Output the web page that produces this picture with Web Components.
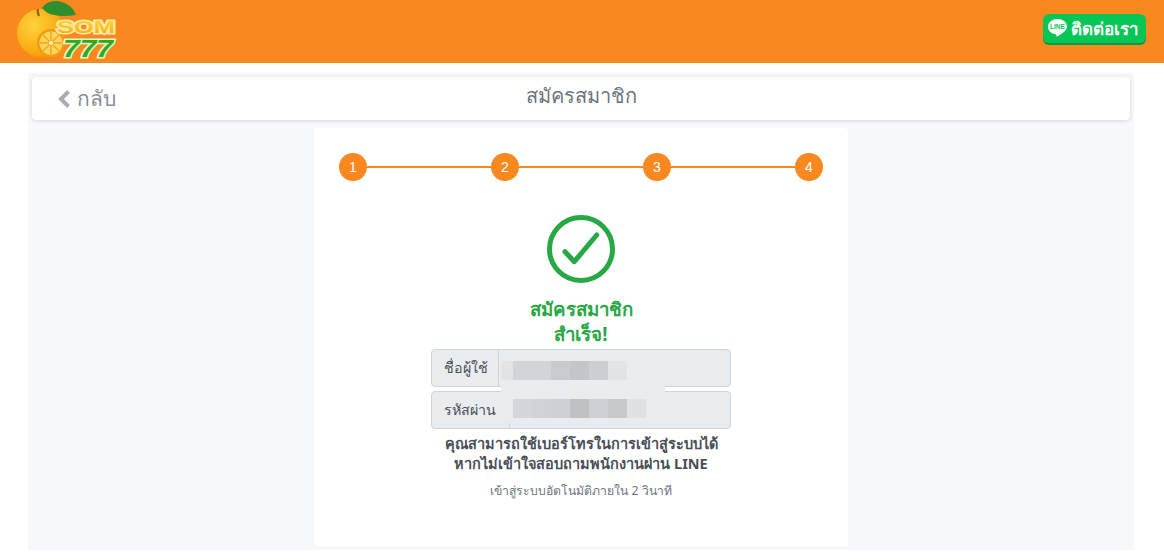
<!DOCTYPE html>
<html lang="th">
<head>
<meta charset="utf-8">
<title>สมัครสมาชิก</title>
<style>
html, body { margin: 0; padding: 0; background: #fff; }
body { height: 560px; overflow: hidden; font-family: "Noto Sans", "Liberation Sans", sans-serif; color: #495057; }
</style>
</head>
<body>
<top-header></top-header>
<page-body>
  <title-bar back="กลับ">สมัครสมาชิก</title-bar>
  <register-card>
    <step-line></step-line>
    <success-mark></success-mark>
    <pixel-field label="ชื่อผู้ใช้" kind="user"></pixel-field>
    <pixel-field label="รหัสผ่าน" kind="pass"></pixel-field>
  </register-card>
</page-body>

<script>
class TopHeader extends HTMLElement {
    constructor() {
        super();
        this.attachShadow({ mode: 'open' });
    }

    connectedCallback() {
        this.shadowRoot.innerHTML = `
            <style>
                :host { display: flex; justify-content: space-between; align-items: flex-start; height: 63px; background: #f9881e; padding: 0 18px 0 16px; }
                .logo { display: block; width: 102px; height: 63px; }
                .line-btn { display: flex; align-items: center; gap: 4px; box-sizing: border-box; width: 103px; height: 29px; margin-top: 14px; padding-left: 5px; background: #06c755; border-radius: 6px; box-shadow: 0 2px 0 #069a48; color: #fff; font-weight: 700; font-size: 17px; }
                svg.bubble { width: 19px; height: 19px; flex: none; }
            </style>
            <svg class="logo" viewBox="0 0 102 63">
                <defs>
                    <radialGradient id="o" cx="0.35" cy="0.35" r="0.8"><stop offset="0" stop-color="#ffd23c"/><stop offset="0.7" stop-color="#f9a90f"/><stop offset="1" stop-color="#e88a05"/></radialGradient>
                    <linearGradient id="g" x1="0" y1="0" x2="0" y2="1"><stop offset="0" stop-color="#ffdb3a"/><stop offset="1" stop-color="#f7a80e"/></linearGradient>
                </defs>
                <circle cx="25" cy="33" r="24" fill="url(#o)"/>
                <path d="M22 9 Q21 12 23 16" stroke="#8a5a22" stroke-width="2" fill="none"/>
                <path d="M26 8 Q31 0 42 1 Q55 3 60 15 Q47 17 38 15 Q31 14 26 8Z" fill="#2f8f2c"/>
                <circle cx="35" cy="43" r="14" fill="#f79a12"/>
                <circle cx="35" cy="43" r="11.500" fill="#ffd65c"/>
                <g stroke="#f7a51c" stroke-width="1.500">
                    <path d="M35 32V54M24 43H46M27 35L43 51M43 35L27 51"/>
                </g>
                <circle cx="35" cy="43" r="2" fill="#fff3c4"/>
                <text x="41" y="33" font-family="Liberation Sans" font-weight="700" font-size="17" textLength="58" lengthAdjust="spacingAndGlyphs" fill="url(#g)" stroke="#ffe9a8" stroke-width="3" paint-order="stroke">SOM</text>
                <text x="47" y="57" font-family="Liberation Sans" font-style="italic" font-weight="700" font-size="24" textLength="50" lengthAdjust="spacingAndGlyphs" fill="#35a822" stroke="#d9f7c4" stroke-width="3" paint-order="stroke">777</text>
            </svg>
            <div class="line-btn">
                <svg class="bubble" viewBox="0 0 19 19">
                    <path d="M9.500 0C4.300 0 0 3.400 0 7.700c0 3.800 3.300 7 7.800 7.600.6.100.7.500.6 1-.1.700-.2 1.400.5 1.200 1.500-.5 6.200-3.500 8.200-5.800C18.300 10.500 19 9.200 19 7.700 19 3.400 14.700 0 9.500 0z" fill="#fff"/>
                    <text x="9.500" y="9.800" text-anchor="middle" font-family="Liberation Sans" font-weight="700" font-size="6.500" fill="#06c755">LINE</text>
                </svg>
                <span>ติดต่อเรา</span>
            </div>
        `;
    }
}

class PageBody extends HTMLElement {
    constructor() {
        super();
        this.attachShadow({ mode: 'open' });
    }

    connectedCallback() {
        this.shadowRoot.innerHTML = `
            <style>
                :host { display: block; box-sizing: border-box; width: 1106px; height: 477px; margin: 10px 0 0 28px; padding: 4px; background: #f7f8fa; }
            </style>
            <slot></slot>
        `;
    }
}

class TitleBar extends HTMLElement {
    constructor() {
        super();
        this.attachShadow({ mode: 'open' });
    }

    connectedCallback() {
        this.shadowRoot.innerHTML = `
            <style>
                :host { display: grid; grid-template-columns: 1fr auto 1fr; align-items: center; height: 43px; padding: 0 25px; background: #fff; border-radius: 4px; box-shadow: 0 1px 4px rgba(0,0,0,.14); color: #6c757d; }
                .back { display: flex; align-items: center; gap: 6px; font-size: 21px; color: #868e96; }
                .title { font-size: 20px; margin-top: -5px; }
                svg { width: 14px; height: 20px; }
            </style>
            <div class="back">
                <svg viewBox="0 0 14 20"><path d="M11.500 2.500 4 10l7.500 7.500" fill="none" stroke="#a9adb2" stroke-width="4"/></svg>
                <span>${this.getAttribute('back')}</span>
            </div>
            <div class="title"><slot></slot></div>
        `;
    }
}

class RegisterCard extends HTMLElement {
    constructor() {
        super();
        this.attachShadow({ mode: 'open' });
    }

    connectedCallback() {
        this.shadowRoot.innerHTML = `
            <style>
                :host { display: block; position: relative; box-sizing: border-box; width: 534px; height: 418px; margin: 8px 0 0 282px; padding: 25px 25px 0; background: #fff; border-radius: 4px; }
                .note { margin-top: 1px; text-align: center; font-weight: 700; font-size: 14.500px; line-height: 20px; color: #495057; }
                .auto { margin-top: 9px; text-align: center; font-size: 12.200px; line-height: 18px; color: #6c757d; }
                .patch { position: absolute; left: 187px; top: 252px; width: 164px; height: 12px; background: #eaecef; }
                .patch.side { top: 264px; width: 12px; height: 31px; background: #e9ecef; }
            </style>
            <slot></slot>
            <div class="patch"></div>
            <div class="patch side"></div>
            <div class="note">คุณสามารถใช้เบอร์โทรในการเข้าสู่ระบบได้<br>หากไม่เข้าใจสอบถามพนักงานผ่าน LINE</div>
            <div class="auto">เข้าสู่ระบบอัตโนมัติภายใน 2 วินาที</div>
        `;
    }
}

class StepLine extends HTMLElement {
    constructor() {
        super();
        this.attachShadow({ mode: 'open' });
    }

    connectedCallback() {
        const dots = [1, 2, 3, 4].map(n => `<div class="dot">${n}</div>`).join('<div class="bar"></div>');
        this.shadowRoot.innerHTML = `
            <style>
                :host { display: flex; align-items: center; width: 484px; }
                .dot { display: flex; align-items: center; justify-content: center; width: 28px; height: 28px; border-radius: 50%; background: #f9881e; color: #fff; font: 14px "Liberation Sans", sans-serif; }
                .bar { flex: 1; height: 2px; background: #f9881e; }
            </style>
            ${dots}
        `;
    }
}

class SuccessMark extends HTMLElement {
    constructor() {
        super();
        this.attachShadow({ mode: 'open' });
    }

    connectedCallback() {
        this.shadowRoot.innerHTML = `
            <style>
                :host { display: block; margin-top: 34px; text-align: center; color: #28a745; }
                svg { display: block; width: 68px; height: 68px; margin: 0 auto; }
                .msg { margin-top: 13px; margin-bottom: 3px; font-weight: 700; font-size: 18.700px; line-height: 25px; }
            </style>
            <svg viewBox="0 0 68 68">
                <circle cx="34" cy="34" r="31.500" fill="none" stroke="#28a745" stroke-width="5"/>
                <path d="M18 36.700 27.300 46.700 49.700 20" fill="none" stroke="#28a745" stroke-width="5" stroke-linecap="round" stroke-linejoin="round"/>
            </svg>
            <div class="msg">สมัครสมาชิก<br>สำเร็จ!</div>
        `;
    }
}

class PixelField extends HTMLElement {
    constructor() {
        super();
        this.attachShadow({ mode: 'open' });
    }

    connectedCallback() {
        // blurred out value in the reference, drawn as mosaic cells
        const isPass = this.getAttribute('kind') === 'pass';
        const cells = isPass
            ? ['#d3d6da', '#cfd2d6', '#cdd0d4', '#bfc2c5', '#cdd0d4', '#c6c9cc', '#dfe1e4']
            : ['#d1d4d8', '#d1d4d8', '#c8ccd0', '#c2c5c9', '#cbced2', '#e1e3e6'];
        this.shadowRoot.innerHTML = `
            <style>
                :host { display: flex; position: relative; box-sizing: border-box; width: 300px; height: 38px; margin: 0 0 4px 92px; background: #e9ecef; border: 1px solid #ced4da; border-radius: 4px; color: #495057; font-size: 14.300px; }
                .label { display: flex; align-items: center; box-sizing: border-box; width: ${isPass ? 78 : 67}px; padding-left: 11.500px; border-right: 1px solid #ced4da; white-space: nowrap; }
                .mosaic { position: absolute; left: 81px; top: ${isPass ? 7 : 11}px; display: flex; }
                .mosaic i { display: block; width: 19px; height: 19px; }
                .first { position: absolute; left: 69px; top: 11px; width: 12px; height: 19px; background: #e2e3e5; }
            </style>
            <div class="label">${this.getAttribute('label')}</div>
            ${isPass ? '' : '<div class="first"></div>'}
            <div class="mosaic">${cells.map(c => `<i style="background:${c}"></i>`).join('')}</div>
        `;
    }
}

customElements.define('top-header', TopHeader);
customElements.define('page-body', PageBody);
customElements.define('title-bar', TitleBar);
customElements.define('register-card', RegisterCard);
customElements.define('step-line', StepLine);
customElements.define('success-mark', SuccessMark);
customElements.define('pixel-field', PixelField);
</script>
</body>
</html>
